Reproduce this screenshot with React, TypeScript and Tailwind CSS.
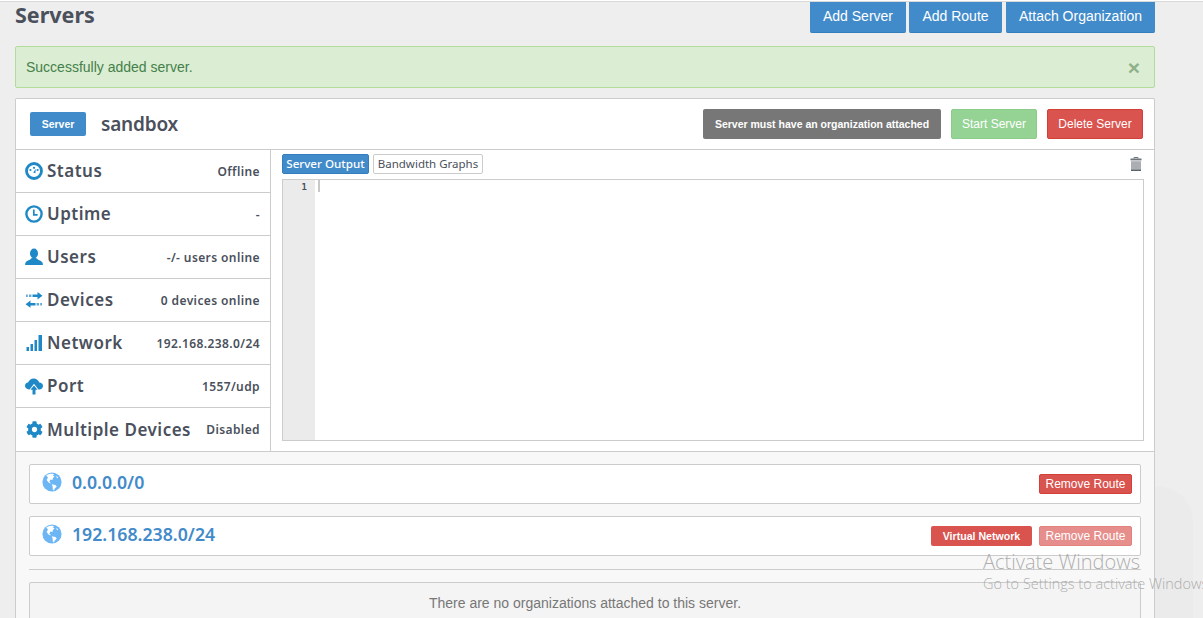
import React from 'react';
import { FaCog } from 'react-icons/fa';

const ui = "font-['Noto_Sans',sans-serif]";
const arial = "font-['Liberation_Sans',Arial,sans-serif]";

const StatusIcon = () => (
  <svg viewBox="0 0 18 18" className="w-[18px] h-[18px]">
    <circle cx="9" cy="9" r="7.5" fill="none" stroke="#1f88c6" strokeWidth="2.8" />
    <circle cx="5.4" cy="8" r="1.1" fill="#1f88c6" />
    <circle cx="9" cy="5.8" r="1.1" fill="#1f88c6" />
    <circle cx="12.6" cy="8" r="1.1" fill="#1f88c6" />
    <path d="M8.2 10.4 10.8 6.8 10.4 11.2Z" fill="#1f88c6" />
  </svg>
);

const ClockIcon = () => (
  <svg viewBox="0 0 18 18" className="w-[18px] h-[18px]">
    <circle cx="9" cy="9" r="7.6" fill="none" stroke="#1f88c6" strokeWidth="2.4" />
    <path d="M8.8 4.6V9.8H12.6" fill="none" stroke="#1f88c6" strokeWidth="1.7" />
  </svg>
);

const UserIcon = () => (
  <svg viewBox="0 0 18 18" className="w-[18px] h-[18px]">
    <ellipse cx="9" cy="5.4" rx="4" ry="4.9" fill="#1f88c6" />
    <path d="M6.8 9.5C6.8 11.6 1.8 12.2.6 14.6.2 15.4.1 16.2.1 17H17.9C17.9 16.2 17.8 15.4 17.4 14.6 16.2 12.2 11.2 11.6 11.2 9.5Z" fill="#1f88c6" />
  </svg>
);

const TransferIcon = () => (
  <svg viewBox="0 0 18 18" className="w-[18px] h-[18px]">
    <path d="M12.5 1 17.5 4.8 12.5 8.4V6H7.5V3.6H12.5Z" fill="#1f88c6" />
    <path d="M1 3.6H2.8V6H1ZM4 3.6H6.4V6H4Z" fill="#1f88c6" fillOpacity="0.7" />
    <path d="M5.5 9.4.5 13.2 5.5 16.8V14.4H10.5V12H5.5Z" fill="#1f88c6" />
    <path d="M11.6 12H14V14.4H11.6ZM15.2 12H17V14.4H15.2Z" fill="#1f88c6" fillOpacity="0.7" />
  </svg>
);

const SignalIcon = () => (
  <svg viewBox="0 0 18 18" className="w-[18px] h-[18px]">
    <path d="M1.5 13H4V17H1.5ZM5.5 10H8V17H5.5ZM9.5 6H12V17H9.5ZM13.5 1H17V17H13.5Z" fill="#1f88c6" />
  </svg>
);

const CloudIcon = () => (
  <svg viewBox="0 0 18 18" className="w-[18px] h-[18px]">
    <path d="M4 12.4C1.8 12.4 0 10.8 0 8.8 0 7 1.4 5.7 3.1 5.5 3.9 3.2 6 1.4 8.6 1.4 11.3 1.4 13.6 3.2 14.2 5.6 16.3 5.7 18 7 18 8.9 18 10.8 16.4 12.4 14.3 12.4H13.4L9 6.8 4.6 12.4Z" fill="#1f88c6" />
    <path d="M9 8.4 12.6 12.8H10.5V17.6H7.5V12.8H5.4Z" fill="#1f88c6" />
  </svg>
);

const GlobeIcon = () => (
  <svg viewBox="0 0 20 20" className="w-[20px] h-[20px] shrink-0">
    <circle cx="10" cy="10" r="9.6" fill="#6db6f6" />
    <path d="M4.2 3.6C6.4 1.8 9.8 1.4 12 2.2L10.8 3.6 12.6 4.2 11 6 10.4 8 8.4 7.6 7.4 9.8 9.4 11.4 6.8 10.8 4.6 8 6 5.4Z" fill="#ffffff" />
    <path d="M9.8 12.2 13.4 13 14.8 14.6 12.8 16.4 12 18.4 10.8 17.4 10.6 14.6Z" fill="#ffffff" />
    <path d="M14.2 3.6 16.2 5.4 15 6.2Z" fill="#ffffff" />
  </svg>
);

const TrashIcon = () => (
  <svg viewBox="0 0 12 14" className="w-[12px] h-[14px]">
    <path d="M4 1.5V.5H8V1.5" fill="none" stroke="#70757a" strokeWidth="1" />
    <path d="M.5 1.5H11.5V3.4H.5Z" fill="#70757a" />
    <path d="M1 4.2H11V12.4H1Z" fill="#abaeb2" />
    <path d="M1 12.4H11V14H1Z" fill="#5e6368" />
  </svg>
);

const stats = [
  { label: 'Status', value: 'Offline', icon: <StatusIcon /> },
  { label: 'Uptime', value: '-', icon: <ClockIcon /> },
  { label: 'Users', value: '-/- users online', icon: <UserIcon /> },
  { label: 'Devices', value: '0 devices online', icon: <TransferIcon /> },
  { label: 'Network', value: '192.168.238.0/24', icon: <SignalIcon /> },
  { label: 'Port', value: '1557/udp', icon: <CloudIcon /> },
  { label: 'Multiple Devices', value: 'Disabled', icon: <FaCog className="w-[17px] h-[17px] text-[#1f88c6] ml-px" /> },
];

const routes = [
  { network: '0.0.0.0/0', virtual: false },
  { network: '192.168.238.0/24', virtual: true },
];

const TopButton = ({ label, className }: { label: string; className: string }) => (
  <button className={`h-[31px] pb-[2px] bg-[#428bca] border-b border-[#357ebd] rounded-b-[2px] text-white text-[14px] ${className}`}>{label}</button>
);

export default function App() {
  return (
    <div className={`relative h-[618px] overflow-hidden bg-[#eeeeee] ${arial}`}>
      <div className="h-[2px] border-b border-[#d9d9d9] bg-white" />

      <div className="px-[15px] w-[1170px]">
        <div className="flex justify-between h-[31px]">
          <h1 className={`text-[21.5px] leading-[26px] font-bold text-[#4a505c] ${ui}`}>Servers</h1>
          <div className="flex gap-[3px]">
            <TopButton label="Add Server" className="w-[96px]" />
            <TopButton label="Add Route" className="w-[93px] mr-px" />
            <TopButton label="Attach Organization" className="w-[149px]" />
          </div>
        </div>

        <div className="mt-[13px] h-[42px] flex items-center justify-between pl-[10px] pr-[14px] bg-[#dbedd3] border border-[#b1dc9b] rounded-[2px] text-[#44804a] text-[14px]">
          <span>Successfully added server.</span>
          <span className="text-[#8fb089] text-[21px] font-bold leading-none">×</span>
        </div>

        <div className="mt-[10px] bg-white border border-[#cccccc] border-b-0 rounded-t-[2px]">
          <div className="h-[51px] flex items-center pl-[14px] pr-[11px] border-b border-[#cccccc]">
            <span className="w-[56px] h-[24px] pt-px flex items-center justify-center bg-[#428bca] rounded-[2px] text-white text-[10.5px] font-bold">Server</span>
            <span className={`ml-[15px] text-[19px] tracking-[-0.2px] font-semibold text-[#4a505c] ${ui}`}>sandbox</span>
            <div className="ml-auto flex gap-[10px] text-[12px]">
              <span className="w-[238px] h-[30px] pt-px flex items-center justify-center bg-[#777777] rounded-[2px] text-white text-[10.5px] font-bold">Server must have an organization attached</span>
              <button className="w-[86px] h-[30px] bg-[#95d395] border border-[#8ccb8c] rounded-[2px] text-white">Start Server</button>
              <button className="w-[96px] h-[30px] bg-[#d9534f] border border-[#d43f3a] rounded-[2px] text-white">Delete Server</button>
            </div>
          </div>

          <div className="flex h-[302px] border-b border-[#cccccc]">
            <div className={`w-[255px] border-r border-[#cccccc] ${ui}`}>
              {stats.map((s, i) => (
                <div key={s.label} className={`h-[43px] flex items-center pl-[9px] pr-[10px] ${i < stats.length - 1 ? 'border-b border-[#cccccc]' : ''}`}>
                  <span className="w-[18px] flex justify-center">{s.icon}</span>
                  <span className="ml-[4px] text-[17px] font-semibold text-[#4a505c] tracking-[0.5px]">{s.label}</span>
                  <span className="ml-auto mt-px text-[12px] font-semibold text-[#4a505c] tracking-[0.4px]">{s.value}</span>
                </div>
              ))}
            </div>

            <div className="flex-1 pl-[11px] pr-[10px] pt-[4px]">
              <div className="flex items-start h-[25px]">
                <button className={`w-[87px] h-[20px] bg-[#428bca] border border-[#357ebd] rounded-[2px] text-white text-[11.6px] font-medium ${ui}`}>Server Output</button>
                <button className={`ml-[4px] w-[110px] h-[20px] bg-white border border-[#cccccc] rounded-[2px] text-[#4a505c] text-[11.5px] ${ui}`}>Bandwidth Graphs</button>
                <span className="ml-auto mt-[3px] mr-[2px]"><TrashIcon /></span>
              </div>
              <div className="flex h-[262px] border border-[#cccccc] bg-white">
                <div className="w-[32px] bg-[#ebebeb] text-right pr-[8px] text-[9px] leading-[12px] pt-[1px] font-semibold text-[#4a505c] font-['DejaVu_Sans_Mono',monospace]">1</div>
                <div className="ml-[3px] w-[2px] h-[12px] bg-[#c8c8c8]" />
              </div>
            </div>
          </div>

          <div className="bg-[#f8f8f8] px-[13px] pt-[12px] h-[200px]">
            {routes.map((r) => (
              <div key={r.network} className="h-[40px] mb-[12px] flex items-center pl-[12px] pr-[8px] bg-white border border-[#cccccc] rounded-[2px]">
                <span className="-mt-[4px]"><GlobeIcon /></span>
                <span className={`ml-[10px] -mt-[3px] text-[17.7px] font-semibold text-[#428bca] ${ui}`}>{r.network}</span>
                <div className="ml-auto flex gap-[7px]">
                  {r.virtual && (
                    <span className="w-[101px] h-[20px] pt-px flex items-center justify-center bg-[#d9534f] rounded-[2px] text-white text-[10.6px] font-bold">Virtual Network</span>
                  )}
                  <button className={`w-[93px] h-[20px] border border-[#d43f3a] rounded-[2px] bg-[#d9534f] text-white text-[12px] ${r.virtual ? 'opacity-65' : ''}`}>Remove Route</button>
                </div>
              </div>
            ))}
            <div className="h-px bg-[#cccccc] mt-[13px]" />
            <div className="mt-[12px] h-[60px] pt-[10px] bg-[#f4f4f4] border border-[#cccccc] rounded-[2px] text-center text-[14px] text-[#777777]">
              There are no organizations attached to this server.
            </div>
          </div>
        </div>
      </div>

      {/* windows watermark */}
      <div className="absolute left-[1155px] top-[486px] w-[38px] h-[132px] bg-[#ebebeb] rounded-tr-[36px]" />
      <div className="absolute left-[983px] top-[549px] text-[20px] leading-[26px] text-[#9a9a9a]/80 font-['Open_Sans',sans-serif] font-light whitespace-nowrap">Activate Windows</div>
      <div className="absolute left-[983px] top-[574px] text-[14.5px] leading-[20px] text-[#9a9a9a]/80 font-['Open_Sans',sans-serif] font-light whitespace-nowrap">Go to Settings to activate Windows.</div>
    </div>
  );
}
